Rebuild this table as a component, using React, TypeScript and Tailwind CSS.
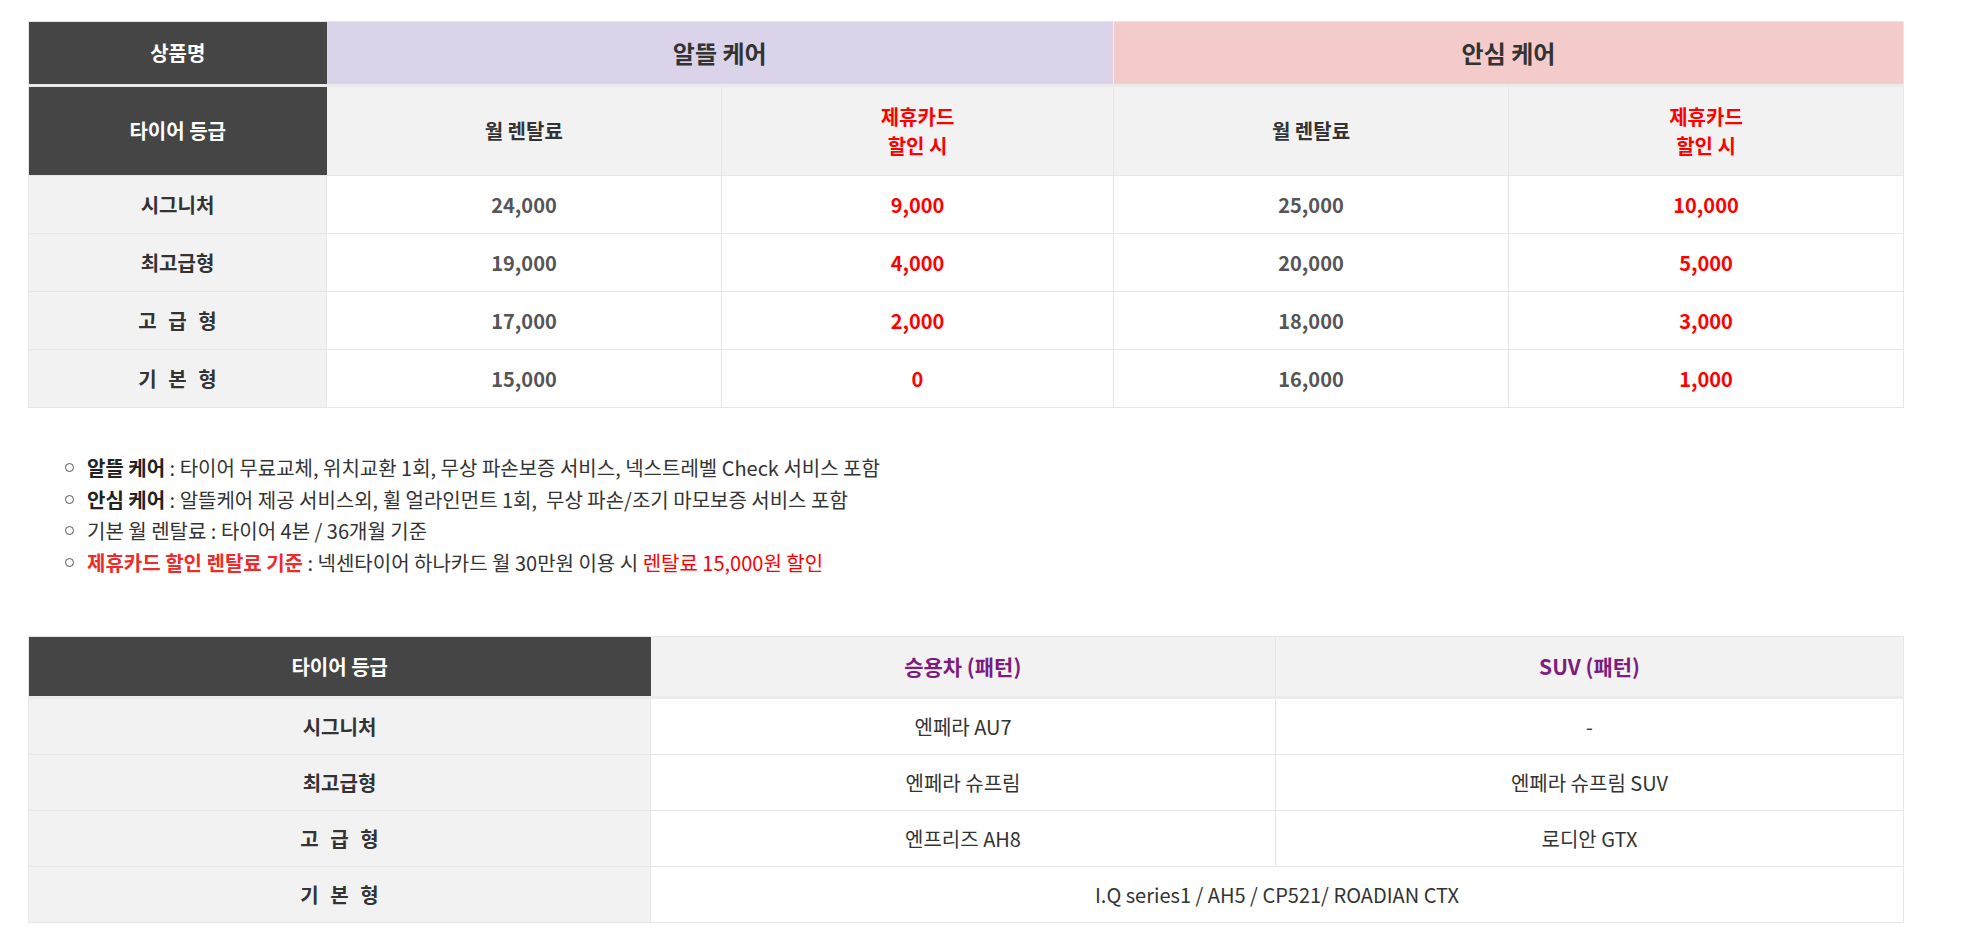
import React from "react";

const font = "font-['Noto_Sans_CJK_KR','Noto_Sans_KR',sans-serif]";

const rows1 = [
  { name: "시그니처", a: "24,000", b: "9,000", c: "25,000", d: "10,000" },
  { name: "최고급형", a: "19,000", b: "4,000", c: "20,000", d: "5,000" },
  { name: "고 급 형", a: "17,000", b: "2,000", c: "18,000", d: "3,000" },
  { name: "기 본 형", a: "15,000", b: "0", c: "16,000", d: "1,000" },
];

const rows2 = [
  { name: "시그니처", a: "엔페라 AU7", b: "-" },
  { name: "최고급형", a: "엔페라 슈프림", b: "엔페라 슈프림 SUV" },
  { name: "고 급 형", a: "엔프리즈 AH8", b: "로디안 GTX" },
];

function Bullet() {
  return <span className="mr-[13px] inline-block h-[9px] w-[9px] shrink-0 rounded-full border border-[#555]" />;
}

export default function App() {
  return (
    <div className={`min-h-screen bg-white pl-[28px] pt-[21px] ${font}`}>
      <table className="w-[1875px] table-fixed border-collapse border border-[#e6e6e6] text-center">
        <colgroup>
          <col className="w-[298px]" />
          <col className="w-[395px]" />
          <col className="w-[392px]" />
          <col className="w-[395px]" />
          <col className="w-[395px]" />
        </colgroup>
        <thead>
          <tr className="h-[64px] border-b-[3px] border-b-[#ebebeb]">
            <th className="bg-[#454545] text-[20px] font-bold text-white">상품명</th>
            <th colSpan={2} className="border-r border-[#f0f0f0] bg-[#dbd3e9] text-[24px] font-bold text-[#333]">
              알뜰 케어
            </th>
            <th colSpan={2} className="bg-[#f3cbcb] text-[24px] font-bold text-[#333]">
              안심 케어
            </th>
          </tr>
          <tr className="h-[90px]">
            <th className="bg-[#454545] text-[20px] font-bold text-white">타이어 등급</th>
            <th className="border-r border-[#e6e6e6] bg-[#f2f2f2] text-[20px] font-bold text-[#333]">월 렌탈료</th>
            <th className="border-r border-[#e6e6e6] bg-[#f2f2f2] text-[20px] font-bold leading-[29px] text-[#ff0000]">
              제휴카드
              <br />
              할인 시
            </th>
            <th className="border-r border-[#e6e6e6] bg-[#f2f2f2] text-[20px] font-bold text-[#333]">월 렌탈료</th>
            <th className="bg-[#f2f2f2] text-[20px] font-bold leading-[29px] text-[#ff0000]">
              제휴카드
              <br />
              할인 시
            </th>
          </tr>
        </thead>
        <tbody>
          {rows1.map((r) => (
            <tr key={r.name} className="h-[58px] border-t border-[#e6e6e6]">
              <td className="border-r border-[#e6e6e6] bg-[#f2f2f2] text-[20px] font-bold text-[#333] [word-spacing:7px]">
                {r.name}
              </td>
              <td className="border-r border-[#e6e6e6] text-[20px] font-bold text-[#555]">{r.a}</td>
              <td className="border-r border-[#e6e6e6] text-[20px] font-bold text-[#ff0000]">{r.b}</td>
              <td className="border-r border-[#e6e6e6] text-[20px] font-bold text-[#555]">{r.c}</td>
              <td className="text-[20px] font-bold text-[#ff0000]">{r.d}</td>
            </tr>
          ))}
        </tbody>
      </table>

      <ul className="mt-[44px] flex flex-col pl-[37px] text-[20px] leading-[31.6px] text-[#333]">
        <li className="flex items-center">
          <Bullet />
          <span>
            <b className="text-[#222]">알뜰 케어</b> : 타이어 무료교체, 위치교환 1회, 무상 파손보증 서비스, 넥스트레벨 Check 서비스 포함
          </span>
        </li>
        <li className="flex items-center">
          <Bullet />
          <span>
            <b className="text-[#222]">안심 케어</b> : 알뜰케어 제공 서비스외, 휠 얼라인먼트 1회,&nbsp; 무상 파손/조기 마모보증 서비스 포함
          </span>
        </li>
        <li className="flex items-center">
          <Bullet />
          <span>기본 월 렌탈료 : 타이어 4본 / 36개월 기준</span>
        </li>
        <li className="flex items-center">
          <Bullet />
          <span>
            <b className="text-[#ee2b2b]">제휴카드 할인 렌탈료 기준</b> : 넥센타이어 하나카드 월 30만원 이용 시{" "}
            <span className="text-[#ff0000]">렌탈료 15,000원 할인</span>
          </span>
        </li>
      </ul>

      <table className="mt-[58px] w-[1875px] table-fixed border-collapse border border-[#e6e6e6] text-center">
        <colgroup>
          <col className="w-[622px]" />
          <col className="w-[625px]" />
          <col className="w-[628px]" />
        </colgroup>
        <thead>
          <tr className="h-[61px] border-b-[3px] border-b-[#ebebeb]">
            <th className="bg-[#454545] text-[20px] font-bold text-white">타이어 등급</th>
            <th className="border-r border-[#e6e6e6] bg-[#f2f2f2] text-[21px] font-bold text-[#7d1b7e]">승용차 (패턴)</th>
            <th className="bg-[#f2f2f2] text-[21px] font-bold text-[#7d1b7e]">SUV (패턴)</th>
          </tr>
        </thead>
        <tbody>
          {rows2.map((r, i) => (
            <tr key={r.name} className={`border-t border-[#e6e6e6] ${i === 0 ? "h-[57px]" : "h-[56px]"}`}>
              <td className="border-r border-[#e6e6e6] bg-[#f2f2f2] text-[20px] font-bold text-[#333] [word-spacing:7px]">
                {r.name}
              </td>
              <td className="border-r border-[#e6e6e6] text-[20px] text-[#333]">{r.a}</td>
              <td className="text-[20px] text-[#333]">{r.b}</td>
            </tr>
          ))}
          <tr className="h-[56px] border-t border-[#e6e6e6]">
            <td className="border-r border-[#e6e6e6] bg-[#f2f2f2] text-[20px] font-bold text-[#333] [word-spacing:7px]">
              기 본 형
            </td>
            <td colSpan={2} className="text-[20px] text-[#333]">
              I.Q series1 / AH5 / CP521/ ROADIAN CTX
            </td>
          </tr>
        </tbody>
      </table>
    </div>
  );
}
